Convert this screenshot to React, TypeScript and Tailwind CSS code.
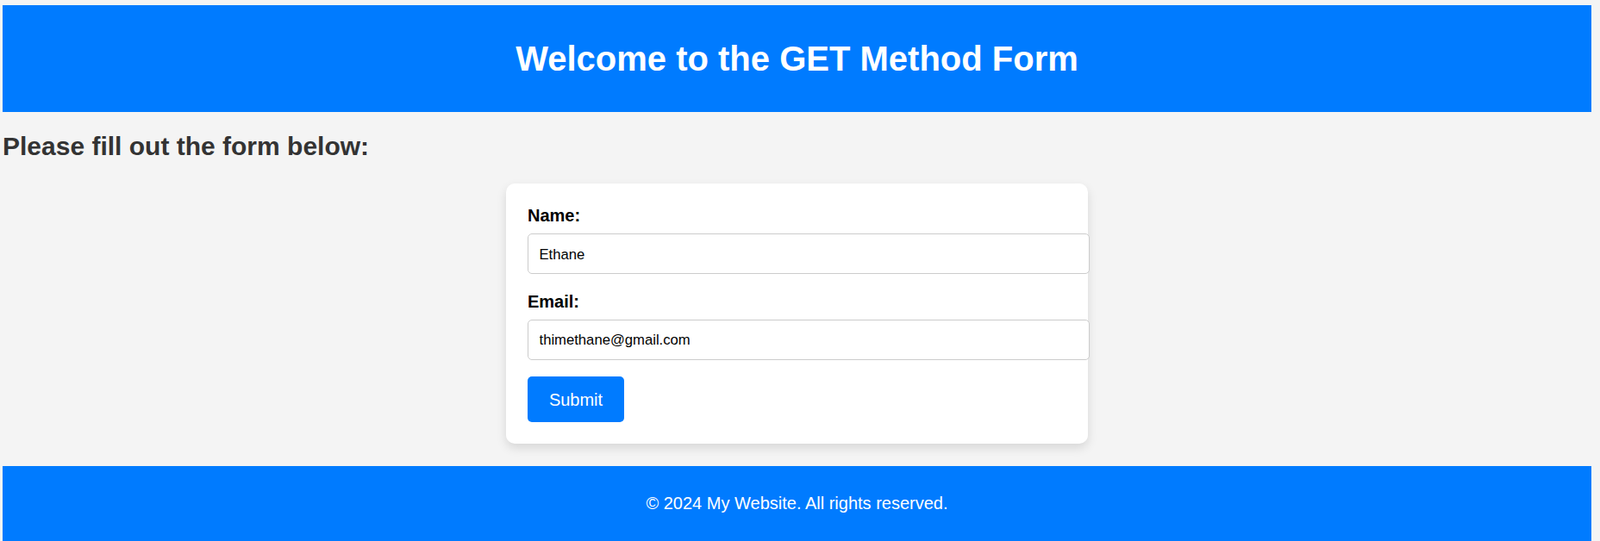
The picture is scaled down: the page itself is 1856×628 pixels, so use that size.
import React from "react";

export default function App() {
  return (
    <div className="min-h-[628px] bg-[#f4f4f4] pt-[6px] pl-[3px] pr-[10px] font-['Liberation_Sans',Arial,sans-serif]">
      <header className="h-[124px] bg-[#007bff] pt-[39px] text-center">
        <h1 className="text-[40px] font-bold leading-[46px] text-white">
          Welcome to the GET Method Form
        </h1>
      </header>
      <h2 className="mt-[23px] text-[30px] font-bold leading-[34.5px] text-[#333]">
        Please fill out the form below:
      </h2>
      <div className="mt-[25.5px] flex justify-center">
        <form
          className="w-[675px] rounded-[10px] bg-white px-[25px] pt-[26px] pb-[25px] shadow-[0_5px_12px_rgba(0,0,0,0.12)]"
          onSubmit={(e) => e.preventDefault()}
        >
          <label className="mb-[10px] block text-[20px] font-bold leading-[22px] text-black">
            Name:
          </label>
          <input
            type="text"
            defaultValue="Ethane"
            className="mb-[20.5px] block h-[47px] w-[652px] rounded-[5px] border border-[#ccc] bg-white px-[12.5px] pt-[2px] text-[16.67px] text-black outline-none"
          />
          <label className="mb-[10px] block text-[20px] font-bold leading-[22px] text-black">
            Email:
          </label>
          <input
            type="email"
            defaultValue="thimethane@gmail.com"
            className="mb-[19.5px] block h-[47px] w-[652px] rounded-[5px] border border-[#ccc] bg-white px-[12.5px] pt-[2px] text-[16.67px] text-black outline-none"
          />
          <button
            type="submit"
            className="block h-[53px] w-[112px] rounded-[5px] bg-[#007bff] pt-[2px] text-[20px] leading-[23px] text-white"
          >
            Submit
          </button>
        </form>
      </div>
      <footer className="mt-[25.5px] h-[88.5px] bg-[#007bff] pt-[32px] text-center text-[20px] leading-[23px] text-white">
        <p>© 2024 My Website. All rights reserved.</p>
      </footer>
    </div>
  );
}
